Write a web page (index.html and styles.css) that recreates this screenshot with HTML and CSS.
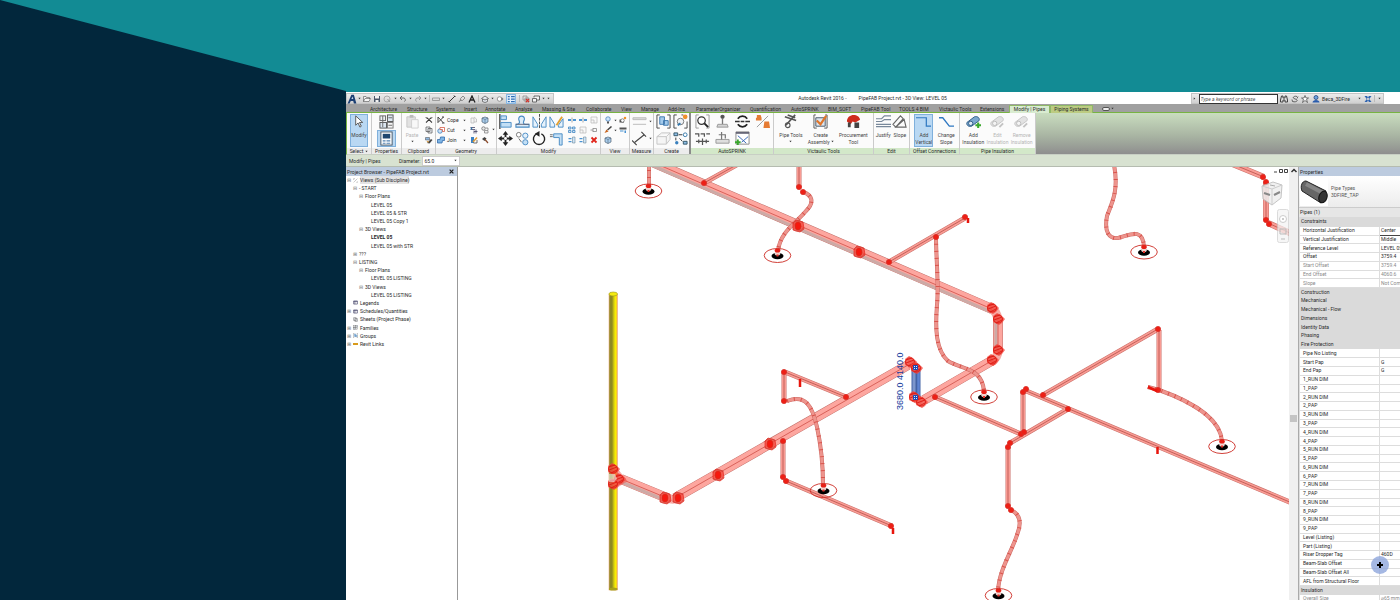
FILE: index.html
```html
<!DOCTYPE html>
<html lang="en">
<head>
<meta charset="utf-8">
<title>Autodesk Revit 2016 - PipeFAB Project.rvt</title>
<link rel="stylesheet" href="styles.css">
</head>
<body>
<svg class="sprite" aria-hidden="true">
  <symbol id="i-logo" viewBox="0 0 16 16"><path d="M1 15 7 1h4l4 14h-4l-1-4H6l-2 4z" fill="#1c3f73"/><path d="M7 8h3L9 4z" fill="#c8d8ea"/></symbol>
  <symbol id="i-open" viewBox="0 0 16 16"><path d="M1 13V3h5l1 2h6v3M1 13l3-6h11l-3 6z" fill="#f4f4f4" stroke="#555" stroke-width="1.2"/></symbol>
  <symbol id="i-save" viewBox="0 0 16 16"><path d="M2 2h12v12H2z" fill="#4a5668"/><path d="M4 2h8v5H4zM5 10h6v4H5z" fill="#f2f2f2"/></symbol>
  <symbol id="i-sync" viewBox="0 0 16 16"><circle cx="8" cy="8" r="6" fill="none" stroke="#aaa" stroke-width="2"/><path d="m9 8 5 6" stroke="#999" stroke-width="2"/></symbol>
  <symbol id="i-undo" viewBox="0 0 16 16"><path d="M3 6h7a4 4 0 0 1 1 7M6 2 2 6l4 4" fill="none" stroke="#666" stroke-width="2"/></symbol>
  <symbol id="i-redo" viewBox="0 0 16 16"><path d="M13 6H6a4 4 0 0 0-1 7M10 2l4 4-4 4" fill="none" stroke="#999" stroke-width="2"/></symbol>
  <symbol id="i-dim" viewBox="0 0 16 16"><path d="M1 6h14M1 11h14M1 6v5M15 6v5" stroke="#888" stroke-width="1.5"/></symbol>
  <symbol id="i-line" viewBox="0 0 16 16"><path d="M2 14 14 2" stroke="#333" stroke-width="2"/><path d="M1 12l3 3M12 1l3 3" stroke="#333" stroke-width="2"/></symbol>
  <symbol id="i-tag" viewBox="0 0 16 16"><path d="M2 14 6 9M5 7l5-5 4 4-5 5H5z" fill="none" stroke="#777" stroke-width="1.6"/></symbol>
  <symbol id="i-text" viewBox="0 0 16 16"><path d="M2 15 8 2l6 13M4 10h8" fill="none" stroke="#222" stroke-width="2.6"/></symbol>
  <symbol id="i-house" viewBox="0 0 16 16"><path d="m1 7 7-5 7 5-7 3zM3 8v5l5 2 5-2V8" fill="#e6eaf0" stroke="#555" stroke-width="1.5"/></symbol>
  <symbol id="i-sect" viewBox="0 0 16 16"><circle cx="7" cy="8" r="4.500" fill="#fff" stroke="#777" stroke-width="1.4"/><path d="m11 4 4 4-4 4z" fill="#777"/></symbol>
  <symbol id="i-thin" viewBox="0 0 16 16"><path d="M1 1h14v14H1z" fill="#e6f2fd" stroke="#5b9ad5"/><path d="M3 4h3M3 8h3M3 12h3M8 4h6M8 8h6M8 12h6" stroke="#2d6cb4" stroke-width="2"/></symbol>
  <symbol id="i-close" viewBox="0 0 16 16"><path d="M2 2h8v8H2zM6 6h8v8H6z" fill="#ddd" stroke="#888" stroke-width="1.4"/><path d="m8 8 6 6m0-6-6 6" stroke="#d0342c" stroke-width="2.4"/></symbol>
  <symbol id="i-win" viewBox="0 0 16 16"><path d="M1 7h8v7H1zM4 5V2h11v8H9" fill="#f3f3f3" stroke="#444" stroke-width="1.5"/></symbol>
  <symbol id="i-down" viewBox="0 0 8 8"><path d="M1 2h6L4 6z" fill="#333"/></symbol>
  <symbol id="i-find" viewBox="0 0 16 16"><path d="M3 2h3v4h4V2h3l2 8v4h-5v-4H6v4H1v-4z" fill="#ddd" stroke="#333" stroke-width="1.8"/></symbol>
  <symbol id="i-sub" viewBox="0 0 16 16"><path d="M12 3C7 1 2 5 6 7l5 2c4 3-2 6-8 4M12 7l2-4M3 13l-1-4" fill="none" stroke="#444" stroke-width="1.6"/></symbol>
  <symbol id="i-star" viewBox="0 0 16 16"><path d="m8 1 2 5h5l-4 3 2 6-5-4-5 4 2-6-4-3h5z" fill="#fff" stroke="#444" stroke-width="1.4"/></symbol>
  <symbol id="i-user" viewBox="0 0 16 16"><circle cx="8" cy="5" r="4" fill="#6ea3e0" stroke="#1d3c74" stroke-width="1.500"/><path d="M1 15c0-7 14-7 14 0z" fill="#2a5cac"/></symbol>
  <symbol id="i-exch" viewBox="0 0 16 16"><path d="M1 2h5l9 12h-5zM15 2h-5L1 14h5z" fill="#2f64b0"/></symbol>
  <symbol id="i-cursor" viewBox="0 0 16 16"><path d="M5 2v10l2.500-2.500 2 4.500 1.500-1-2-4h3.500z" fill="#fff" stroke="#555"/></symbol>
  <symbol id="i-ptype" viewBox="0 0 16 16"><rect x="1" y="2" width="6" height="5" fill="#eef2f6" stroke="#666"/><rect x="9" y="1" width="6" height="7" fill="#dce6f0" stroke="#555"/><rect x="1" y="9" width="7" height="6" fill="#dce6f0" stroke="#555"/><rect x="9" y="9" width="6" height="6" fill="#f6f6f6" stroke="#777"/><path d="M4 2v12M10 12h4M10 4h4" stroke="#666"/></symbol>
  <symbol id="i-props" viewBox="0 0 16 16"><rect x="2" y="1" width="12" height="14" fill="#fff" stroke="#456"/><path d="M4 3h8v5H4z" fill="#20476f"/><path d="M4 10.500h3M8 10.500h4M4 13h3M8 13h4" stroke="#5080b0" stroke-width="1.2"/></symbol>
  <symbol id="i-paste" viewBox="0 0 16 16"><path d="M2 3h9v11H2z" fill="#e2e2e2" stroke="#c8c8c8"/><path d="M5 1h4v3H5z" fill="#bbb"/><path d="M7 6h7v9H7z" fill="#f8f8f8" stroke="#d0d0d0"/></symbol>
  <symbol id="i-cutx" viewBox="0 0 16 16"><path d="M2 3c5 2 8 6 12 10M14 3C9 5 6 9 2 13" stroke="#333" stroke-width="2.2" fill="none"/><path d="M1 3h4M11 3h4" stroke="#888" stroke-width="2"/></symbol>
  <symbol id="i-copy" viewBox="0 0 16 16"><path d="M2 2h8v9H2zM6 5h8v9H6z" fill="#eef2f6" stroke="#555" stroke-width="1.4"/></symbol>
  <symbol id="i-match" viewBox="0 0 16 16"><path d="M1 3h8v5H1z" fill="#8fb7df" stroke="#444"/><path d="m4 14 8-8 3 2-6 7z" fill="#444"/><path d="M3 10h4v4z" fill="#d8932e"/></symbol>
  <symbol id="i-cope" viewBox="0 0 16 16"><path d="M2 2v12M2 2l11 12M13 2 3 12M10 2h4M10 14h5" fill="none" stroke="#444" stroke-width="2"/></symbol>
  <symbol id="i-cut" viewBox="0 0 16 16"><circle cx="6" cy="10" r="4.500" fill="#cfe3f6" stroke="#3579b8" stroke-width="1.5"/><path d="M6 3h9v8h-4V7H6z" fill="#fff" stroke="#d24a32" stroke-width="1.4"/></symbol>
  <symbol id="i-join" viewBox="0 0 16 16"><path d="M1 7h5l1-5h8v7h-4l-1 5H1z" fill="#7fb5e4" stroke="#2b66a8" stroke-width="1.5"/></symbol>
  <symbol id="i-ghost" viewBox="0 0 16 16"><path d="M2 4h6v10H2zM8 2l5 4v6H8" fill="#f4f4f4" stroke="#b4b4b4" stroke-width="1.4"/></symbol>
  <symbol id="i-cube" viewBox="0 0 16 16"><path d="m2 4 6-2 6 2v8l-6 3-6-3z" fill="#a9cdec" stroke="#567" stroke-width="1.4"/><path d="m2 4 6 3 6-3M8 7v8" stroke="#456" fill="none"/></symbol>
  <symbol id="i-beam" viewBox="0 0 16 16"><path d="M1 3h9M1 7h9M8 9v6M12 7v8M8 11h7" stroke="#446" stroke-width="1.6"/><path d="M3 3v4" stroke="#37a" stroke-width="3"/></symbol>
  <symbol id="i-wall" viewBox="0 0 16 16"><circle cx="5" cy="5" r="3.500" fill="#e8e8e8" stroke="#666" stroke-width="1.4"/><path d="M7 9h7v5H7zM9 4h5v4" fill="#eee" stroke="#777" stroke-width="1.4"/></symbol>
  <symbol id="i-paint" viewBox="0 0 16 16"><path d="M2 2h6v12H2z" fill="#3c82c4"/><path d="m6 12 8-9" stroke="#e09a34" stroke-width="3"/><path d="M7 14h7V8" fill="none" stroke="#444" stroke-width="1.5"/></symbol>
  <symbol id="i-demo" viewBox="0 0 16 16"><path d="m2 6 5-4 4 3-4 5z" fill="#444"/><path d="m8 7 6 7" stroke="#8a4a2a" stroke-width="2.4"/></symbol>
  <symbol id="i-align" viewBox="0 0 16 16"><path d="M2 0v16" stroke="#222" stroke-width="1.2"/><path d="M3 2h6v4H3zM3 9h11v5H3z" fill="#c3dff5" stroke="#4a8cc4"/></symbol>
  <symbol id="i-offset" viewBox="0 0 16 16"><path d="M1 14h14v-3h-4c-3 0-2-3-1-5 1-5-7-5-6 0 1 2 2 5-3 5z" fill="#dcecf9" stroke="#4a8cc4" stroke-width="1.2"/><path d="M1 11h14" stroke="#667"/></symbol>
  <symbol id="i-mirror" viewBox="0 0 16 16"><path d="M1 14V3l5 8v3zM15 14V3l-5 8v3z" fill="#e6f2fc" stroke="#4a8cc4"/><path d="M8 0v16" stroke="#444" stroke-dasharray="3 1"/></symbol>
  <symbol id="i-mirror2" viewBox="0 0 16 16"><path d="M1 14V3l5 8v3zM15 14V5l-5 7v2z" fill="#e6f2fc" stroke="#4a8cc4"/><path d="m8 12 6-9" stroke="#e3a032" stroke-width="2"/></symbol>
  <symbol id="i-move" viewBox="0 0 16 16"><path d="M8 0 5 4h2v3H4V5L0 8l4 3V9h3v3H5l3 4 3-4H9V9h3v2l4-3-4-3v2H9V4h2z" fill="#222"/><circle cx="8" cy="8" r="1.500" fill="#fff"/></symbol>
  <symbol id="i-copy2" viewBox="0 0 16 16"><circle cx="4" cy="4" r="2.500" fill="#fff" stroke="#777"/><circle cx="11" cy="5" r="2.800" fill="#e3f0fb" stroke="#4a8cc4"/><circle cx="11" cy="12" r="2.800" fill="#c3dff5" stroke="#4a8cc4"/><path d="m4 8 3 4" stroke="#666"/></symbol>
  <symbol id="i-rotate" viewBox="0 0 16 16"><path d="M10 3a6 6 0 1 1-5 0" fill="none" stroke="#222" stroke-width="1.5"/><path d="m8 0-5 3 5 3z" fill="#222"/></symbol>
  <symbol id="i-trim" viewBox="0 0 16 16"><path d="M5 3h9v12h-3V7H5z" fill="#c3dff5" stroke="#4a8cc4"/><path d="M1 4h3M1 6h3" stroke="#666"/></symbol>
  <symbol id="i-split" viewBox="0 0 16 16"><path d="M0 8h6M10 8h6" stroke="#4a93d2" stroke-width="4"/><path d="M8 3v10" stroke="#777" stroke-width="1.2"/></symbol>
  <symbol id="i-array" viewBox="0 0 16 16"><path d="M1 2h5v4H1zM9 2h5v4H9zM1 9h5v4H1zM9 9h5v4H9z" fill="#cfe5f7" stroke="#3a80bd" stroke-width="1.5"/></symbol>
  <symbol id="i-scale" viewBox="0 0 16 16"><path d="M2 2h12v12H2zM2 8h6v6" fill="#f8f8f8" stroke="#b8b8b8" stroke-width="1.4"/></symbol>
  <symbol id="i-pin" viewBox="0 0 16 16"><path d="M1 8h5M6 4v8M6 5h7v6H6" fill="none" stroke="#888" stroke-width="1.6"/></symbol>
  <symbol id="i-ext" viewBox="0 0 16 16"><path d="M1 5h6M1 11h6" stroke="#4a93d2" stroke-width="2.500"/><path d="M9 2h5v12H9z" fill="#cfe5f7" stroke="#578"/></symbol>
  <symbol id="i-x" viewBox="0 0 16 16"><path d="m3 3 10 10M13 3 3 13" stroke="#e0261b" stroke-width="3.600"/></symbol>
  <symbol id="i-bulb" viewBox="0 0 16 16"><circle cx="8" cy="6" r="4.500" fill="#cce4fa" stroke="#4680bd" stroke-width="1.5"/><path d="M6 11h4v4H6z" fill="#555"/></symbol>
  <symbol id="i-brush" viewBox="0 0 16 16"><path d="m7 8 8-7" stroke="#444" stroke-width="3"/><path d="M1 14 5 7l4 4z" fill="#c8641e"/></symbol>
  <symbol id="i-hide" viewBox="0 0 16 16"><path d="M1 7h9v6H1z" fill="#555"/><circle cx="7" cy="9" r="3.500" fill="#fff" stroke="#333"/><circle cx="12" cy="4" r="2.500" fill="#f0902a"/></symbol>
  <symbol id="i-over" viewBox="0 0 16 16"><path d="M1 3h14v4H1z" fill="#555"/><path d="M2 9h7v2H2zM11 9h3v5h-3z" fill="#4a93d2"/></symbol>
  <symbol id="i-meas" viewBox="0 0 16 16"><path d="M1 4h14v2H1zM1 11h14" fill="#ddd" stroke="#bbb"/></symbol>
  <symbol id="i-meas2" viewBox="0 0 16 16"><path d="M3 12 13 4M0 10l5 5M10 1l5 5" stroke="#444" stroke-width="1.2"/></symbol>
  <symbol id="i-group" viewBox="0 0 16 16"><path d="M4 1H1v14h3M12 1h3v14h-3" fill="none" stroke="#444"/><path d="M4 3h5v8H4zM8 7h5v5H8z" fill="#a4cbec" stroke="#3f78ae"/></symbol>
  <symbol id="i-group2" viewBox="0 0 16 16"><path d="M4 1H1v14h3M11 1H9M15 8v7h-3" fill="none" stroke="#444"/><circle cx="8" cy="8" r="3.500" fill="#eef2f6" stroke="#777"/><circle cx="13" cy="3" r="2.500" fill="#f0902a"/><path d="m5 12 3-2" stroke="#37a" stroke-width="2"/></symbol>
  <symbol id="i-box" viewBox="0 0 16 16"><path d="m1 6 5-4h9v7l-4 5H1zM1 6h10l4-4M11 6v8" fill="#f5f5f5" stroke="#c4c4c4"/></symbol>
  <symbol id="i-similar" viewBox="0 0 16 16"><path d="M1 2h4v3H1zM11 11h4v3h-4z" fill="#8ebfe8" stroke="#356"/><circle cx="13" cy="4" r="2" fill="#fff" stroke="#37a"/><path d="M6 4h4M3 7v3M7 8l3 3" stroke="#333"/><circle cx="4" cy="12.500" r="1.800" fill="#3a80bd"/></symbol>
  <symbol id="i-mag" viewBox="0 0 16 16"><path d="M4 1H1v14h3M12 1h3v14h-3" fill="none" stroke="#999"/><circle cx="7" cy="7" r="4" fill="#fff" stroke="#333" stroke-width="1.300"/><path d="m10 10 4 4" stroke="#222" stroke-width="2"/></symbol>
  <symbol id="i-spk" viewBox="0 0 16 16"><circle cx="8" cy="3" r="2.300" fill="#555"/><path d="M8 5v6" stroke="#777" stroke-width="1.4"/><path d="M3 11h10l1 3H2z" fill="#d5d5d5" stroke="#999"/></symbol>
  <symbol id="i-cyc" viewBox="0 0 16 16"><path d="M3 5a6 6 0 0 1 10 0M13 11a6 6 0 0 1-10 0" fill="none" stroke="#222" stroke-width="1.800"/><path d="M0 8h5M11 8h5M6 8h4" stroke="#333" stroke-width="1.500"/></symbol>
  <symbol id="i-orange" viewBox="0 0 16 16"><path d="M1 7h6V4L6 1H2v3H1zM9 15h7l-1-7h-5z" fill="#e57b33"/><path d="M2 14 14 2" stroke="#999"/></symbol>
  <symbol id="i-branch" viewBox="0 0 16 16"><path d="M0 3h4v3M6 3h4v3M12 3h4M1 11h14M8 8v7M4 9v4M12 9v4" fill="none" stroke="#555" stroke-width="1.3"/></symbol>
  <symbol id="i-valve" viewBox="0 0 16 16"><path d="M1 9h14v4H1z" fill="#dedede" stroke="#999"/><path d="M7 1v8M4 4h7v4" fill="none" stroke="#777" stroke-width="1.3"/></symbol>
  <symbol id="i-chart" viewBox="0 0 16 16"><path d="M1 1h14v13H1z" fill="#fff" stroke="#888"/><path d="M1 1h14v2H1z" fill="#667"/><path d="m3 5 9 8M14 6 7 12" stroke="#3565b5"/><path d="M3 9v6M0 12h6" stroke="#3aa82d" stroke-width="2"/></symbol>
  <symbol id="i-tools" viewBox="0 0 16 16"><path d="m2 3 12 4M5 1l8 3M3 12 13 1" stroke="#555" stroke-width="1.8"/><circle cx="5" cy="12" r="2.500" fill="none" stroke="#555" stroke-width="1.2"/></symbol>
  <symbol id="i-asm" viewBox="0 0 16 16"><path d="M3 1H1v14h3M13 1h2v14h-3" fill="none" stroke="#555"/><path d="M3 4h10v9H3z" fill="#dbe5ee" stroke="#456"/><path d="m4 7 4 4 6-9" fill="none" stroke="#e0752b" stroke-width="2.400"/></symbol>
  <symbol id="i-proc" viewBox="0 0 16 16"><path d="M1 8c0-9 13-9 14-2l-5 3-3-1-2 3z" fill="#cf2c1d"/><path d="M2 9h3v5H2zM9 9h5v6H9z" fill="#444"/></symbol>
  <symbol id="i-just" viewBox="0 0 16 16"><path d="M0 5h6l3-3h7M0 8h6l3-2h7M0 11h16M0 13.500h16" fill="none" stroke="#78889a" stroke-width="1.200"/></symbol>
  <symbol id="i-slope" viewBox="0 0 16 16"><path d="m1 11 8-9 3 3-8 9zM4 14l9-8 2 8z" fill="none" stroke="#666" stroke-width="1.200"/></symbol>
  <symbol id="i-addv" viewBox="0 0 16 16"><path d="M0 4h11v9h5" fill="none" stroke="#2f78c2" stroke-width="1.300"/></symbol>
  <symbol id="i-chg" viewBox="0 0 16 16"><path d="M0 4h4l7 9h5" fill="none" stroke="#2f78c2" stroke-width="1.400"/></symbol>
  <symbol id="i-ins" viewBox="0 0 16 16"><path d="m1 9 8-6c3-1 6 1 5 4l-8 6c-3 1-6-1-5-4z" fill="#7aa7cf" stroke="#2f5c86"/><circle cx="5" cy="10" r="2.300" fill="#dbe9f5" stroke="#2f5c86"/><path d="M13 9v6M10 12h6" stroke="#3aa82d" stroke-width="2.200"/></symbol>
  <symbol id="i-insg" viewBox="0 0 16 16"><path d="m1 9 8-6c3-1 6 1 5 4l-8 6c-3 1-6-1-5-4z" fill="#e2e2e2" stroke="#c4c4c4"/><circle cx="5" cy="10" r="2.300" fill="#f4f4f4" stroke="#bbb"/><path d="m10 14 4-4" stroke="#c4c4c4" stroke-width="2"/></symbol>
  <symbol id="i-sheet" viewBox="0 0 16 16"><path d="M2 3h12v10H2z" fill="#fff" stroke="#446" stroke-width="2"/><path d="M2 5h12M6 4v9" stroke="#446" stroke-width="2"/></symbol>
  <symbol id="i-views" viewBox="0 0 16 16"><path d="M2 2h4M2 2v4M14 2l-9 9M2 14l3-3M11 14h3v-3" fill="none" stroke="#888" stroke-width="1.500"/></symbol>
</svg>

<main class="hero">
  <div class="wedge"></div>
  <div class="app">
    <header class="titlebar">
      <div class="qat">
        <button class="logo" aria-label="Application menu"><svg class="ic m"><use href="#i-logo"/></svg><svg class="dd"><use href="#i-down"/></svg></button>
        <svg class="ic s"><use href="#i-open"/></svg><svg class="ic s"><use href="#i-save"/></svg><svg class="ic s"><use href="#i-sync"/></svg><svg class="dd"><use href="#i-down"/></svg>
        <svg class="ic s"><use href="#i-undo"/></svg><svg class="dd"><use href="#i-down"/></svg><svg class="ic s"><use href="#i-redo"/></svg><svg class="dd"><use href="#i-down"/></svg>
        <i class="sep"></i><svg class="ic s"><use href="#i-dim"/></svg><svg class="dd"><use href="#i-down"/></svg><svg class="ic s"><use href="#i-line"/></svg><svg class="ic s"><use href="#i-tag"/></svg><svg class="ic s"><use href="#i-text"/></svg>
        <i class="sep"></i><svg class="ic s"><use href="#i-house"/></svg><svg class="dd"><use href="#i-down"/></svg><svg class="ic s"><use href="#i-sect"/></svg><svg class="ic m hot"><use href="#i-thin"/></svg>
        <i class="sep"></i><svg class="ic s"><use href="#i-close"/></svg><svg class="ic s"><use href="#i-win"/></svg><svg class="dd"><use href="#i-down"/></svg><svg class="dd"><use href="#i-down"/></svg>
      </div>
      <h1 class="caption"><span>Autodesk Revit 2016 -</span><span>PipeFAB Project.rvt - 3D View: LEVEL 05</span></h1>
      <div class="info">
        <svg class="dd side"><use href="#i-down"/></svg>
        <input type="search" class="search" aria-label="Search" placeholder="Type a keyword or phrase">
        <svg class="ic s"><use href="#i-find"/></svg><svg class="ic s"><use href="#i-sub"/></svg><svg class="ic s"><use href="#i-star"/></svg><svg class="ic s"><use href="#i-user"/></svg>
        <span class="name">Beca_3DFire</span><svg class="dd"><use href="#i-down"/></svg><svg class="ic s"><use href="#i-exch"/></svg><i class="sep"></i><svg class="dd"><use href="#i-down"/></svg>
      </div>
    </header>

    <nav class="tabs">
      <button>Architecture</button><button>Structure</button><button>Systems</button><button>Insert</button><button>Annotate</button><button>Analyze</button><button>Massing &amp; Site</button><button>Collaborate</button><button>View</button><button>Manage</button><button>Add-Ins</button><button>ParameterOrganizer</button><button>Quantification</button><button>AutoSPRINK</button><button>BIM_SOFT</button><button>PipeFAB Tool</button><button>TOOLS 4 BIM</button><button>Victaulic Tools</button><button>Extensions</button><button class="active">Modify | Pipes</button><button class="context">Piping Systems</button><span class="pill"><b></b><svg class="dd"><use href="#i-down"/></svg></span>
    </nav>

    <div class="ribbon">
      <section class="panel"><div class="body big"><button class="tool on"><svg class="ic l"><use href="#i-cursor"/></svg>Modify</button></div><h2>Select <svg class="dd"><use href="#i-down"/></svg></h2></section>
      <section class="panel"><div class="body two one"><svg class="ic l"><use href="#i-ptype"/></svg><span class="hotbox"><svg class="ic l"><use href="#i-props"/></svg></span></div><h2>Properties</h2></section>
      <section class="panel"><div class="body clip"><button class="tool off"><svg class="ic l"><use href="#i-paste"/></svg>Paste<svg class="dd"><use href="#i-down"/></svg></button><div class="col"><svg class="ic s"><use href="#i-cutx"/></svg><svg class="ic s"><use href="#i-copy"/></svg><svg class="ic s"><use href="#i-match"/></svg></div></div><h2>Clipboard</h2></section>
      <section class="panel"><div class="body geo">
        <div class="col wide"><button><svg class="ic s"><use href="#i-cope"/></svg>Cope<svg class="dd"><use href="#i-down"/></svg></button><button><svg class="ic s"><use href="#i-cut"/></svg>Cut<svg class="dd"><use href="#i-down"/></svg></button><button><svg class="ic s"><use href="#i-join"/></svg>Join<svg class="dd"><use href="#i-down"/></svg></button></div>
        <div class="col"><svg class="ic s"><use href="#i-ghost"/></svg><svg class="ic s"><use href="#i-beam"/></svg><svg class="ic s"><use href="#i-paint"/></svg></div>
        <div class="col"><svg class="ic s"><use href="#i-cube"/></svg><svg class="ic s"><use href="#i-wall"/></svg><svg class="ic s"><use href="#i-demo"/></svg></div>
        <svg class="dd"><use href="#i-down"/></svg></div><h2>Geometry</h2></section>
      <section class="panel"><div class="body mod">
        <div class="two four"><svg class="ic l"><use href="#i-align"/></svg><svg class="ic l"><use href="#i-offset"/></svg><svg class="ic l"><use href="#i-mirror"/></svg><svg class="ic l"><use href="#i-mirror2"/></svg><svg class="ic l"><use href="#i-move"/></svg><svg class="ic l"><use href="#i-copy2"/></svg><svg class="ic l"><use href="#i-rotate"/></svg><svg class="ic l"><use href="#i-trim"/></svg></div>
        <div class="col"><svg class="ic s"><use href="#i-split"/></svg><svg class="ic s"><use href="#i-array"/></svg><svg class="ic s"><use href="#i-ext"/></svg></div>
        <div class="col"><svg class="ic s"><use href="#i-split"/></svg><svg class="ic s"><use href="#i-scale"/></svg><svg class="ic s"><use href="#i-ext"/></svg></div>
        <div class="col"><svg class="ic s"><use href="#i-scale"/></svg><svg class="ic s"><use href="#i-pin"/></svg><svg class="ic s"><use href="#i-x"/></svg></div></div><h2>Modify</h2></section>
      <section class="panel"><div class="body view"><div class="col"><svg class="ic s"><use href="#i-bulb"/></svg><svg class="ic s"><use href="#i-brush"/></svg><svg class="ic s"><use href="#i-cube"/></svg></div><div class="col"><svg class="dd"><use href="#i-down"/></svg><svg class="dd"><use href="#i-down"/></svg></div><div class="col"><svg class="ic s"><use href="#i-hide"/></svg><svg class="ic s"><use href="#i-over"/></svg></div></div><h2>View</h2></section>
      <section class="panel"><div class="body two pair"><svg class="ic l"><use href="#i-meas"/></svg><svg class="dd"><use href="#i-down"/></svg><svg class="ic l"><use href="#i-meas2"/></svg><svg class="dd"><use href="#i-down"/></svg></div><h2>Measure</h2></section>
      <section class="panel last"><div class="body two duo"><svg class="ic l"><use href="#i-group"/></svg><svg class="ic l"><use href="#i-group2"/></svg><svg class="ic l"><use href="#i-box"/></svg><svg class="ic l"><use href="#i-similar"/></svg></div><h2>Create</h2></section>
      <section class="panel green"><div class="body two quad"><svg class="ic l"><use href="#i-mag"/></svg><svg class="ic l"><use href="#i-spk"/></svg><svg class="ic l"><use href="#i-cyc"/></svg><svg class="ic l"><use href="#i-orange"/></svg><svg class="ic l"><use href="#i-branch"/></svg><svg class="ic l"><use href="#i-valve"/></svg><svg class="ic l"><use href="#i-chart"/></svg></div><h2>AutoSPRINK</h2></section>
      <section class="panel green"><div class="body big"><button class="tool"><svg class="ic l"><use href="#i-tools"/></svg>Pipe Tools<svg class="dd"><use href="#i-down"/></svg></button><button class="tool"><svg class="ic l"><use href="#i-asm"/></svg>Create<span class="row">Assembly <svg class="dd"><use href="#i-down"/></svg></span></button><button class="tool"><svg class="ic l"><use href="#i-proc"/></svg>Procurement<br>Tool</button></div><h2>Victaulic Tools</h2></section>
      <section class="panel green"><div class="body big"><button class="tool"><svg class="ic l"><use href="#i-just"/></svg>Justify</button><button class="tool"><svg class="ic l"><use href="#i-slope"/></svg>Slope</button></div><h2>Edit</h2></section>
      <section class="panel green"><div class="body big"><button class="tool on"><svg class="ic l"><use href="#i-addv"/></svg>Add<br>Vertical</button><button class="tool"><svg class="ic l"><use href="#i-chg"/></svg>Change<br>Slope</button></div><h2>Offset Connections</h2></section>
      <section class="panel green"><div class="body big"><button class="tool"><svg class="ic l"><use href="#i-ins"/></svg>Add<br>Insulation</button><button class="tool off"><svg class="ic l"><use href="#i-insg"/></svg>Edit<br>Insulation</button><button class="tool off"><svg class="ic l"><use href="#i-insg"/></svg>Remove<br>Insulation</button></div><h2>Pipe Insulation</h2></section>
    </div>

    <div class="options"><strong>Modify | Pipes</strong><label for="dia">Diameter:</label><span class="pick"><select id="dia"><option>65.0</option></select><svg class="dd"><use href="#i-down"/></svg></span></div>

    <div class="work">
      <aside class="browser">
        <h2>Project Browser - PipeFAB Project.rvt <button aria-label="Close"><svg class="ic xs" viewBox="0 0 8 8"><path d="m1 1 6 6M7 1 1 7" stroke="#222" stroke-width="2"/></svg></button></h2>
        <ul class="tree">
          <li class="d0"><i class="tw">⊟</i><svg class="ic xs"><use href="#i-views"/></svg><span class="sel">Views (Sub Discipline)</span></li>
          <li class="d1"><i class="tw">⊟</i>- START</li>
          <li class="d2"><i class="tw">⊟</i>Floor Plans</li>
          <li class="d3">LEVEL 05</li><li class="d3">LEVEL 05 &amp; STR</li><li class="d3">LEVEL 05 Copy 1</li>
          <li class="d2"><i class="tw">⊟</i>3D Views</li>
          <li class="d3"><b>LEVEL 05</b></li><li class="d3">LEVEL 05 with STR</li>
          <li class="d1"><i class="tw">⊞</i>???</li>
          <li class="d1"><i class="tw">⊟</i>LISTING</li>
          <li class="d2"><i class="tw">⊟</i>Floor Plans</li><li class="d3">LEVEL 05 LISTING</li>
          <li class="d2"><i class="tw">⊟</i>3D Views</li><li class="d3">LEVEL 05 LISTING</li>
          <li class="d0"><i class="tw"></i><svg class="ic xs"><use href="#i-sheet"/></svg>Legends</li>
          <li class="d0"><i class="tw">⊞</i><svg class="ic xs"><use href="#i-sheet"/></svg>Schedules/Quantities</li>
          <li class="d0"><i class="tw"></i><svg class="ic xs"><use href="#i-copy"/></svg>Sheets (Project Phase)</li>
          <li class="d0"><i class="tw">⊞</i><svg class="ic xs"><use href="#i-ptype"/></svg>Families</li>
          <li class="d0"><i class="tw">⊞</i><svg class="ic xs"><use href="#i-group"/></svg>Groups</li>
          <li class="d0"><i class="tw">⊞</i><i class="link"></i>Revit Links</li>
        </ul>
      </aside>

      <div class="canvas">
        <svg class="model" viewBox="458 167 831 433" preserveAspectRatio="xMinYMin slice" role="img" aria-label="3D view of sprinkler pipework">
          <defs>
            <linearGradient id="yel"><stop offset="0" stop-color="#8f8a26"/><stop offset=".35" stop-color="#8e8920"/><stop offset=".6" stop-color="#d8d010"/><stop offset=".8" stop-color="#fff200"/><stop offset="1" stop-color="#e8a94e"/></linearGradient>
            <g id="mains"><path d="M650 161 992 309M998 318V352M993 360 924 400M908 365 675 498M667 498 621 479"/></g>
            <g id="bends"><path d="M990 308Q997 311 998 320M998 350Q998 358 991 362M916 370Q915 363 908 364M915 397 922 403M678 498Q672 501 665 497M613 470 621 480 613 485"/></g>
            <g id="branches"><path d="M704 183 740 163M799 163V187M889 262 965 218M784 373V401M785 372 846 397M783 441V478M786 481 892 526M935 397 1021 434M1023 434V392M1024 390 1292 503M1043 395 1158 329M1159 330V389M1068 409 1010 443M1008 447V506"/></g>
            <g id="riser"><path d="M1230 163 1264 177M1266 182V220M1268 223 1292 234"/></g>
            <g id="hoses"><path d="M649 163V188M803 192C812 195 815 202 806 211C796 223 780 232 778 251M936 237C936 258 939 285 937 305C935 330 936 350 948 361C960 369 982 367 984 391M1114 165C1119 190 1112 203 1107 216C1104 232 1109 239 1118 238C1128 236 1143 226 1144 247M787 401C805 394 812 405 817 427C822 450 823 465 823 485M1148 387 1159 390C1190 401 1220 418 1222 441M1011 510C1022 515 1021 525 1017 535C1012 551 999 570 998 591"/></g>
            <g id="head"><ellipse rx="13.300" ry="7" fill="none" stroke="#cc2a22" stroke-width=".9"/><ellipse rx="6" ry="3.300" cy=".5" fill="#000"/><ellipse rx="2.800" ry="2" cy="-2" fill="#f2d2ce"/><path d="M-1-1h2v2h-2z" fill="#e43228"/><ellipse rx="2.800" ry="2" cy="-5" fill="#e62017"/></g>
            <g id="coupling"><path d="M-5-3-2-6 5-4 6 3 2 6-5 4z" fill="#f4463c" fill-opacity=".8" stroke="#e42a20" stroke-width=".7"/><ellipse rx="3" ry="4" fill="#f6170e" stroke="#c9301a" stroke-width=".5"/><path d="M-5-2C-4-6 3-6 5-3M-5 3C-3 6 4 6 5 2" fill="none" stroke="#c8443c" stroke-width=".7"/></g>
            <g id="knuckle"><path d="M-5-3-1-6 3-4 7 0 4 4 1 6-5 3z" fill="#f2483e" fill-opacity=".8"/><ellipse rx="4.500" ry="4" fill="none" stroke="#dc1a12" stroke-width=".9"/><path d="M-4 1 4-2M-2 4 4 1M-4-2 2-4" fill="none" stroke="#dc1a12" stroke-width=".9"/></g>
            <circle id="dot" r="2.600" fill="#ee1f15" stroke="#d83028" stroke-width=".8"/>
          </defs>
          <rect x="609" y="294" width="8.500" height="296" fill="url(#yel)" stroke="#edab82" stroke-width=".6"/>
          <ellipse cx="613.200" cy="294" rx="4.300" ry="2" fill="#f4ea10" stroke="#99931f" stroke-width=".6"/>
          <ellipse cx="613.200" cy="589" rx="4.300" ry="1.500" fill="#a8a11c"/>
          <g class="pipe thick"><use href="#mains" class="edge"/><use href="#mains" class="fill"/><path class="shade" d="M649 164 991 312M620 481.500 666 500.500M996 318V352"/><use href="#mains" class="core"/></g>
          <g class="pipe thin"><use href="#branches" class="edge"/><use href="#branches" class="fill"/><use href="#branches" class="core"/></g>
          <g class="pipe thin wide"><use href="#riser" class="edge"/><use href="#riser" class="fill"/><use href="#riser" class="core"/></g>
          <g class="pipe hose"><use href="#hoses" class="edge"/><use href="#hoses" class="fill"/><use href="#hoses" class="rings"/></g>
          <use href="#bends" class="bend"/>
          <path d="M916 368V397" stroke="#4262a4" stroke-width="9"/><path d="M914 368V397" stroke="#7c96cc" stroke-width="3"/><path d="M918.500 368V397" stroke="#5d83d2" stroke-width="2.500"/>
          <g>
            <use href="#coupling" x="798" y="226"/><use href="#coupling" x="859" y="252"/><use href="#coupling" x="770" y="444"/><use href="#coupling" x="718" y="475"/><use href="#coupling" x="665" y="498"/><use href="#coupling" x="678" y="498"/>
            <use href="#knuckle" x="992" y="308"/><use href="#knuckle" x="998" y="319"/><use href="#knuckle" x="998" y="350"/><use href="#knuckle" x="992" y="360"/><use href="#knuckle" x="910" y="362"/><use href="#knuckle" x="916" y="368"/><use href="#knuckle" x="914" y="397"/><use href="#knuckle" x="921" y="402"/><use href="#knuckle" x="613" y="469"/><use href="#knuckle" x="619" y="479"/><use href="#knuckle" x="613" y="484"/>
          </g>
          <path d="M609 474h6l2 5-3 3h-5z" fill="#eee" opacity=".6"/>
          <g>
            <use href="#dot" x="704" y="183"/><use href="#dot" x="799" y="187"/><use href="#dot" x="803" y="192"/><use href="#dot" x="889" y="262"/><use href="#dot" x="936" y="237"/><use href="#dot" x="965" y="217"/><use href="#dot" x="784" y="372"/><use href="#dot" x="784" y="401"/><use href="#dot" x="846" y="397"/><use href="#dot" x="783" y="441"/><use href="#dot" x="783" y="477"/><use href="#dot" x="786" y="481"/><use href="#dot" x="891" y="526"/><use href="#dot" x="935" y="397"/><use href="#dot" x="1021" y="434"/><use href="#dot" x="1024" y="432"/><use href="#dot" x="1023" y="392"/><use href="#dot" x="1026" y="389"/><use href="#dot" x="1043" y="395"/><use href="#dot" x="1158" y="329"/><use href="#dot" x="1158" y="390"/><use href="#dot" x="1068" y="409"/><use href="#dot" x="1010" y="443"/><use href="#dot" x="1008" y="447"/><use href="#dot" x="1008" y="506"/><use href="#dot" x="1011" y="510"/><use href="#dot" x="1263" y="177"/><use href="#dot" x="1266" y="182"/><use href="#dot" x="1266" y="220"/><use href="#dot" x="1269" y="224"/>
          </g>
          <path d="M968 218V223M800 379V387M893 528V534M1157.500 447V454M1148 387 1157 391" stroke="#e8150c" stroke-width="2.500"/>
          <use href="#head" x="648.500" y="191"/><use href="#head" x="777.500" y="255.500"/><use href="#head" x="984" y="397"/><use href="#head" x="1144" y="252"/><use href="#head" x="823.500" y="490.500"/><use href="#head" x="1222" y="446.500"/><use href="#head" x="998.500" y="595.500"/>
          <path d="M913.500 365.500h4v4h-4zM913.500 395.500h4v4h-4z" fill="#dfe8ff" stroke="#1a4ab4"/><path d="M914 367.500h3M915.500 366v3M914 397.500h3M915.500 396v3" stroke="#1a4ab4"/>
          <g class="dims"><text transform="translate(903 410) rotate(-90)">3680.0</text><text transform="translate(903 380) rotate(-90)">4140.0</text></g>
        </svg>
        <div class="overlay">
          <div class="winctl"><svg viewBox="0 0 14 6"><path d="M0 4h3M5.500 1.500h3v3h-3zM10.500 1.500h3v3h-3z" fill="none" stroke="#444"/></svg></div>
          <svg class="viewcube" viewBox="0 0 22 26"><path d="m1 6 11-4 9 3-1 13-9 7-9-6z" fill="#eee" stroke="#bbb" opacity=".85"/><path d="m1 6 10 3 10-4M11 9v16" fill="none" stroke="#ccc"/><path d="m3 13 6 2M13 15l6-3" stroke="#888" stroke-width="2"/><path d="m9 5 5 1" stroke="#aaa"/></svg>
          <svg class="navbar" viewBox="0 0 12 34"><rect x=".5" y=".5" width="11" height="33" rx="2" fill="#f3f3f3" stroke="#ccc" opacity=".7"/><circle cx="6" cy="10" r="3.500" fill="#fff" stroke="#ccc"/><circle cx="6" cy="10" r="1" fill="#bbb"/><path d="M3 20h6v5H3zM4 30h4" fill="none" stroke="#bbb"/></svg>
        </div>
      </div>

      <div class="scroll"><svg viewBox="0 0 8 8"><path d="M1.500 5 4 2.500 6.500 5" fill="none" stroke="#333" stroke-width="1.500"/></svg><i></i></div>

      <aside class="props">
        <h2>Properties</h2>
        <div class="type">
          <svg class="thumb" viewBox="0 0 28 28"><path d="M6 3 26 13 21 25 2 13C0 8 2 3 6 3z" fill="#666" stroke="#222"/><path d="M6 6 23 15" stroke="#868686" stroke-width="4"/><ellipse cx="23" cy="19" rx="4" ry="6" transform="rotate(18 23 19)" fill="#333" stroke="#111"/></svg>
          <p>Pipe Types<br>3DFIRE_TAP</p>
        </div>
        <div class="filter">Pipes (1)</div>
        <table>
          <colgroup><col class="key"><col></colgroup>
          <tbody>
            <tr class="g"><th colspan="2">Constraints</th></tr>
            <tr><th>Horizontal Justification</th><td class="edit">Center</td></tr>
            <tr><th>Vertical Justification</th><td>Middle</td></tr>
            <tr><th>Reference Level</th><td>LEVEL 05</td></tr>
            <tr><th>Offset</th><td>3759.4</td></tr>
            <tr class="ro"><th>Start Offset</th><td>3759.4</td></tr>
            <tr class="ro"><th>End Offset</th><td>4060.6</td></tr>
            <tr class="ro"><th>Slope</th><td>Not Comp</td></tr>
            <tr class="g"><th colspan="2">Construction</th></tr>
            <tr class="g"><th colspan="2">Mechanical</th></tr>
            <tr class="g"><th colspan="2">Mechanical - Flow</th></tr>
            <tr class="g"><th colspan="2">Dimensions</th></tr>
            <tr class="g"><th colspan="2">Identity Data</th></tr>
            <tr class="g"><th colspan="2">Phasing</th></tr>
            <tr class="g"><th colspan="2">Fire Protection</th></tr>
            <tr><th>Pipe No Listing</th><td></td></tr>
            <tr><th>Start Pap</th><td>G</td></tr>
            <tr><th>End Pap</th><td>G</td></tr>
            <tr><th>1_RUN DIM</th><td></td></tr><tr><th>1_PAP</th><td></td></tr>
            <tr><th>2_RUN DIM</th><td></td></tr><tr><th>2_PAP</th><td></td></tr>
            <tr><th>3_RUN DIM</th><td></td></tr><tr><th>3_PAP</th><td></td></tr>
            <tr><th>4_RUN DIM</th><td></td></tr><tr><th>4_PAP</th><td></td></tr>
            <tr><th>5_RUN DIM</th><td></td></tr><tr><th>5_PAP</th><td></td></tr>
            <tr><th>6_RUN DIM</th><td></td></tr><tr><th>6_PAP</th><td></td></tr>
            <tr><th>7_RUN DIM</th><td></td></tr><tr><th>7_PAP</th><td></td></tr>
            <tr><th>8_RUN DIM</th><td></td></tr><tr><th>8_PAP</th><td></td></tr>
            <tr><th>9_RUN DIM</th><td></td></tr><tr><th>9_PAP</th><td></td></tr>
            <tr><th>Level (Listing)</th><td></td></tr>
            <tr><th>Part (Listing)</th><td></td></tr>
            <tr><th>Riser Dropper Tag</th><td>460D</td></tr>
            <tr><th>Beam-Slab Offset</th><td class="at"><svg class="pointer" viewBox="0 0 18 18"><circle cx="9" cy="9" r="9" fill="#8fa6dc" opacity=".8"/><path d="M9 6v6M6 9h6" stroke="#000" stroke-width="2"/></svg></td></tr>
            <tr><th>Beam-Slab Offset All</th><td></td></tr>
            <tr><th>AFL from Structural Floor</th><td></td></tr>
            <tr class="g"><th colspan="2">Insulation</th></tr>
            <tr class="ro"><th>Overall Size</th><td>⌀65 mm</td></tr>
          </tbody>
        </table>
      </aside>
    </div>
  </div>
</main>
</body>
</html>
```
FILE: styles.css
```css
* { box-sizing: border-box; }
body { margin: 0; font: 5px/8px Roboto, "Open Sans", "DejaVu Sans", sans-serif; color: #2a2a2a; }
h1, h2, p, ul { margin: 0; padding: 0; font: inherit; }
ul { list-style: none; }
i { font-style: normal; }
button { font: inherit; color: inherit; border: 0; padding: 0; margin: 0; background: none; }
.sprite { display: none; }

.hero { position: relative; height: 100vh; overflow: hidden; padding: 92px 0 0 346px; background: #128b94; }
.wedge { position: absolute; inset: 0 auto 0 0; width: 346px; background: #02273c; clip-path: polygon(0 0, 100% 91px, 100% 100%, 0 100%); }
.app { position: relative; height: 100%; display: flex; flex-direction: column; background: #fff; }

.ic { display: block; flex: none; }
.xs { width: 5px; height: 5px; }
.s { width: 8px; height: 8px; }
.m { width: 10px; height: 10px; }
.l { width: 15px; height: 15px; }
.dd { display: block; flex: none; width: 3px; height: 3px; }
.sep { width: 1px; height: 7px; background: #bbb; }

.titlebar { display: grid; grid-template-columns: 208px 1fr 193px 16px; height: 12px; flex: none; }
.qat, .info { display: flex; align-items: center; justify-content: space-between; height: 11px; margin-top: 1px; background: linear-gradient(#ececec, #d0d0d0); border: 1px solid #c4c4c4; padding: 0 3px 0 0; }
.logo { display: flex; align-items: center; gap: 1px; }
.hot { background: #a9d0f3; }
.caption { display: flex; justify-content: center; align-items: center; gap: 12px; white-space: nowrap; }
.info { padding: 0 2px 0 1px; }
.side { transform: rotate(-90deg); }
.search { width: 79px; height: 10px; padding: 0 1px; border: 1px solid #333; font: italic 5px/8px Roboto, sans-serif; background: #fff; }
.search::placeholder { color: #555; }
.name { margin-right: 6px; }

.tabs { display: grid; grid-template-columns: 37px 29px 28px 21px 30px 27px 44px 35px 20px 27px 28px 54px 41px 37px 33px 38px 40px 41px 29px 41px 43px 1fr; height: 9px; flex: none; padding-left: 24px; background: #a0a0a0; border-bottom: 1px solid #77b342; }
.tabs button { text-align: left; white-space: nowrap; line-height: 8px; padding-top: 1px; }
.tabs .active, .tabs .context { text-align: center; margin-top: 1px; padding: 0; line-height: 7px; border: 1px solid #8fb867; border-bottom: 0; background: #d9ecd0; }
.tabs .context { background: #bccb82; }
.pill { display: flex; align-items: center; gap: 1px; padding-left: 9px; }
.pill b { width: 8px; height: 4px; border: 1px solid #555; border-radius: 2px; background: #eee; }

.ribbon { display: grid; grid-template-columns: 25px 30px 34px 61px 104px 29px 24px 37px 83px 100px 36px 50px 76px; height: 42px; flex: none; border-left: 1px solid #77b342; background: linear-gradient(#c9ddbf, #a9b5a3 55%, #8e8e8e); border-bottom: 1px solid #c8cfc4; }
.panel { display: flex; flex-direction: column; background: #fbfbfb; border-right: 1px solid #cbcbcb; min-width: 0; }
.panel.last { border-right: 2px solid #8b8b8b; }
.panel h2 { display: flex; justify-content: center; align-items: center; gap: 2px; height: 6px; line-height: 6px; white-space: nowrap; background: #ececec; }
.panel.green h2 { background: #d3e8c9; }
.body { flex: 1; min-height: 0; display: flex; align-items: flex-start; justify-content: center; }
.big { justify-content: space-evenly; }
.tool { display: flex; flex-direction: column; align-items: center; height: 33px; margin-top: 1px; line-height: 7px; white-space: nowrap; text-align: center; color: #444; }
.tool .l { margin-bottom: 3px; }
.tool .dd { margin-top: 1px; }
.row { display: flex; gap: 1px; }
.on { background: #b9d8f3; outline: 1px solid #7fb0dc; outline-offset: -1px; padding: 0 1px; }
.off { color: #b5b5b5; }
.two { display: grid; grid-template-rows: 17px 17px; align-items: center; justify-items: center; align-content: start; justify-content: center; }
.one { grid-template-columns: 18px; }
.hotbox { background: #b9d8f3; border: 1px solid #7fb0dc; padding: 0 1px; }
.four { grid-template-columns: repeat(4, 17px); }
.pair { grid-template-columns: 17px 4px; }
.duo { grid-template-columns: 17px 16px; }
.quad { grid-template-columns: repeat(4, 20px); }
.col { display: grid; grid-template-rows: repeat(3, 10px); align-items: center; padding-top: 2px; }
.clip { justify-content: space-around; }
.geo, .mod { gap: 3px; }
.geo { align-items: center; padding-bottom: 3px; }
.mod { gap: 3px; justify-content: flex-start; }
.view { gap: 2px; }
.wide button { display: grid; grid-template-columns: 9px 15px 4px; align-items: center; text-align: left; gap: 1px; }

.options { display: flex; align-items: center; height: 12px; flex: none; padding-left: 3px; background: #d8e2d1; border-bottom: 1px solid #b5bcb0; }
.options strong { font-weight: 400; width: 50px; }
.pick { display: flex; align-items: center; width: 38px; height: 10px; margin-left: 2px; padding-right: 2px; border: 1px solid #ccc; background: #fff; }
.pick select { appearance: none; flex: 1; min-width: 0; height: 8px; padding: 0 1px; border: 0; background: none; font: inherit; color: inherit; }

.work { flex: 1; min-height: 0; display: grid; grid-template-columns: 112px 1fr 10px 101px; }
.browser { border-right: 1px solid #999; background: #fff; }
.browser h2, .props h2 { display: flex; justify-content: space-between; align-items: center; height: 9px; line-height: 8px; padding: 0 3px 0 1px; background: #bccbdf; white-space: nowrap; }
.tree { display: grid; grid-template-rows: repeat(21, 1fr); height: 172px; padding-left: 1px; }
.tree li { display: flex; align-items: center; gap: 2px; white-space: nowrap; }
.tw { width: 4px; color: #777; line-height: 4px; text-align: center; }
.sel { background: #e4e4e4; }
.d1 { padding-left: 6px; }
.d2 { padding-left: 12px; }
.d3 { padding-left: 24px; }
.link { width: 5px; height: 2px; background: #d89a1c; }

.canvas { position: relative; overflow: hidden; background: #fff; }
.model { display: block; width: 100%; height: 100%; }
.pipe { fill: none; }
.bend { fill: none; stroke: #ef5a50; stroke-width: 9; stroke-opacity: .5; }
.thick .edge { stroke: #c0706a; stroke-width: 10; }
.thick .fill { stroke: #fda69f; stroke-width: 9; }
.thick .shade { stroke: #cdaaa6; stroke-width: 3; }
.thick .core { stroke: #d8625a; stroke-width: 1; }
.thin .edge { stroke: #c9706a; stroke-width: 5; }
.thin .fill { stroke: #f99c94; stroke-width: 4; }
.thin .core { stroke: #c4605a; stroke-width: 1; }
.wide .edge { stroke-width: 6; }
.wide .fill { stroke-width: 5; }
.hose .edge { stroke: #cc6a64; stroke-width: 4; }
.hose .fill { stroke: #ee948d; stroke-width: 3; }
.hose .rings { stroke: #d9544c; stroke-width: 4; stroke-dasharray: 1 6; }
.dims { font: 9px "Liberation Sans", Arial, sans-serif; fill: #123a9c; }
.overlay { position: absolute; top: 0; right: 0; display: flex; flex-direction: column; align-items: flex-end; }
.winctl { height: 8px; padding: 1px 1px 0 0; }
.winctl svg { display: block; width: 14px; height: 6px; }
.viewcube { width: 22px; height: 26px; margin: 5px 6px 3px 0; }
.navbar { width: 12px; height: 34px; }
.scroll { display: flex; flex-direction: column; align-items: center; background: #f0f0f0; border-right: 1px solid #aaa; }
.scroll svg { width: 8px; height: 8px; flex: none; }
.scroll i { width: 7px; height: 7px; margin-top: 240px; background: #c4c4c4; }

.props { overflow: hidden; background: #eee; }
.type { display: flex; align-items: center; gap: 3px; height: 32px; padding-left: 1px; background: linear-gradient(#fff, #ececec); border-bottom: 1px solid #ccc; color: #555; line-height: 7px; }
.thumb { width: 28px; height: 28px; background: #fff; }
.filter { height: 9px; padding-left: 1px; background: #e6e6e6; line-height: 9px; }
.props table { width: 110px; height: 387px; border-collapse: collapse; table-layout: fixed; background: #fff; }
.key { width: 80px; }
.props th, .props td { padding: 0 0 0 1px; border: 1px solid #ddd; font-weight: 400; text-align: left; line-height: 7px; white-space: nowrap; }
.props th { padding-left: 3px; }
.props .g th { padding-left: 1px; background: #dadada; border-color: #dadada; }
.props .ro { color: #888; }
.props .edit { border: 1px solid #444; }
.props .at { position: relative; }
.pointer { position: absolute; left: -9px; top: -4px; width: 18px; height: 18px; }
```
